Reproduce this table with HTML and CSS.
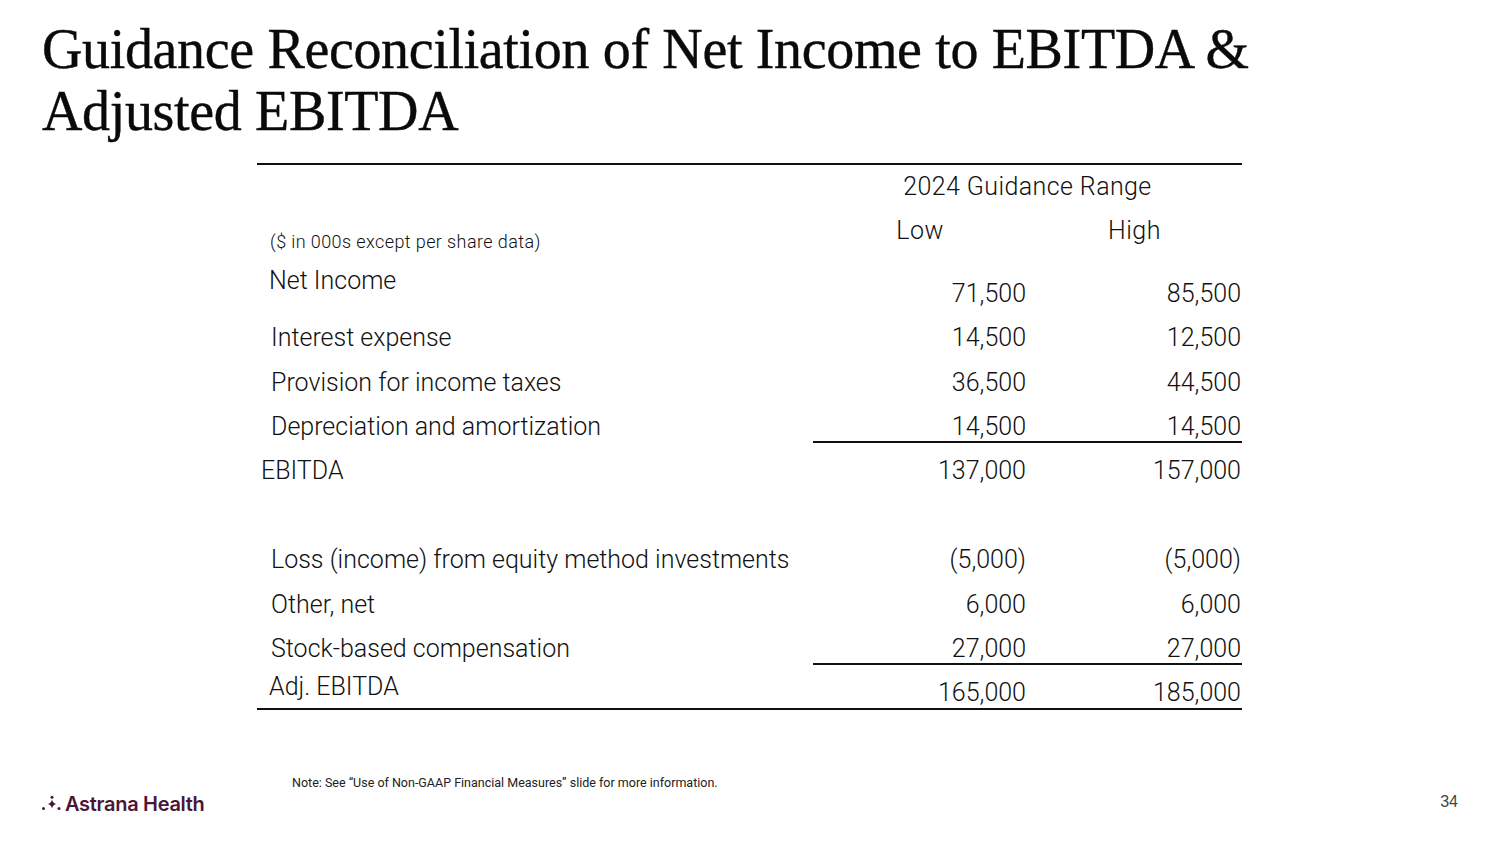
FILE: index.html
```html
<!DOCTYPE html>
<html lang="en">
<head>
<meta charset="utf-8">
<title>Guidance Reconciliation</title>
<link rel="stylesheet" href="styles.css">
</head>
<body>
<div class="slide">
  <h1 class="title">Guidance Reconciliation of Net Income to EBITDA &amp;<br>Adjusted EBITDA</h1>

  <div class="table">
    <div class="range-row"><div class="range">2024 Guidance Range</div></div>
    <div class="row hdr">
      <div class="units">($ in 000s except per share data)</div>
      <div class="colhead">Low</div>
      <div class="colhead">High</div>
    </div>
    <div class="row first">
      <div class="label l13">Net Income</div>
      <div class="val">71,500</div>
      <div class="val">85,500</div>
    </div>
    <div class="row">
      <div class="label">Interest expense</div>
      <div class="val">14,500</div>
      <div class="val">12,500</div>
    </div>
    <div class="row">
      <div class="label">Provision for income taxes</div>
      <div class="val">36,500</div>
      <div class="val">44,500</div>
    </div>
    <div class="row sub">
      <div class="label">Depreciation and amortization</div>
      <div class="val">14,500</div>
      <div class="val">14,500</div>
    </div>
    <div class="row">
      <div class="label l5">EBITDA</div>
      <div class="val">137,000</div>
      <div class="val">157,000</div>
    </div>
    <div class="row blank"></div>
    <div class="row">
      <div class="label">Loss (income) from equity method investments</div>
      <div class="val">(5,000)</div>
      <div class="val">(5,000)</div>
    </div>
    <div class="row">
      <div class="label">Other, net</div>
      <div class="val">6,000</div>
      <div class="val">6,000</div>
    </div>
    <div class="row sub">
      <div class="label">Stock-based compensation</div>
      <div class="val">27,000</div>
      <div class="val">27,000</div>
    </div>
    <div class="row last">
      <div class="label l13">Adj. EBITDA</div>
      <div class="val">165,000</div>
      <div class="val">185,000</div>
    </div>
  </div>

  <div class="footer">
    <p class="note">Note: See “Use of Non-GAAP Financial Measures” slide for more information.</p>
    <div class="footbar">
      <div class="logo">
        <svg class="mark" width="24" height="20" viewBox="0 0 24 20">
          <circle cx="12" cy="3.2" r="1.5" fill="#4b1636"/>
          <circle cx="3.5" cy="14.5" r="1.5" fill="#4b1636"/>
          <circle cx="19" cy="14.5" r="1.5" fill="#4b1636"/>
          <path d="M12 5.5 Q12.9 9.1 16.3 10 Q12.9 10.9 12 14.5 Q11.1 10.9 7.7 10 Q11.1 9.1 12 5.5 Z" fill="#4b1636"/>
        </svg>
        <span class="brand">Astrana Health</span>
      </div>
      <div class="pagenum">34</div>
    </div>
  </div>
</div>
</body>
</html>
```

FILE: styles.css
```css
* { box-sizing: border-box; }
html, body { margin: 0; padding: 0; background: #fff; }
.slide {
  width: 1500px;
  height: 844px;
  display: flex;
  flex-direction: column;
  color: #111;
  font-family: Roboto, "Liberation Sans", sans-serif;
  font-weight: 300;
  overflow: hidden;
}
.title {
  margin: 18px 0 0 42px;
  font-family: "Liberation Serif", "Times New Roman", serif;
  font-weight: 400;
  font-size: 56px;
  line-height: 62px;
  letter-spacing: -0.35px;
  color: #0a0a0a;
  -webkit-text-stroke: 0.4px #0a0a0a;
}
.table {
  margin: 21px 0 0 257px;
  width: 985px;
  border-top: 2px solid #111;
  border-bottom: 2px solid #111;
  font-size: 25px;
  letter-spacing: 0;
}
.range-row {
  display: grid;
  grid-template-columns: 556px 429px;
  padding-top: 7px;
}
.range {
  grid-column: 2;
  text-align: center;
  line-height: 30px;
  font-size: 25px;
  letter-spacing: 0.4px;
}
.row {
  display: grid;
  grid-template-columns: 556px 214px 215px;
  height: 44.4px;
  align-items: center;
}
.hdr {
  margin-top: 14px;
  height: 50px;
  align-items: start;
}
.units {
  font-size: 18px;
  line-height: 20px;
  padding: 16px 0 0 13px;
  letter-spacing: 0.4px;
}
.colhead {
  text-align: center;
  line-height: 30px;
  font-size: 25px;
  letter-spacing: 0.5px;
}
.label {
  padding-left: 14px;
  line-height: 30px;
  white-space: nowrap;
}
.label.l13 { padding-left: 12px; }
.label.l5 { padding-left: 4px; }
.val {
  text-align: right;
  padding-right: 1px;
  line-height: 30px;
}
.first {
  height: 50px;
  align-items: start;
}
.first .val { margin-top: 13px; }
.sub .val {
  line-height: 28px;
  border-bottom: 2px solid #111;
  align-self: start;
  margin-top: 8px;
}
.last {
  height: 37px;
  align-items: start;
}
.last .label { margin-top: 1px; }
.last .val { margin-top: 7px; }
.footer {
  margin-top: auto;
  padding: 0 42px 28px 42px;
}
.note {
  margin: 0 0 2px 250px;
  font-size: 12.5px;
  line-height: 14px;
  font-weight: 400;
  color: #222;
  letter-spacing: 0;
}
.footbar {
  display: flex;
  justify-content: space-between;
  align-items: center;
}
.logo {
  display: flex;
  align-items: center;
  gap: 1px;
  margin-left: -2px;
}
.mark { display: block; }
.brand {
  font-family: Inter, "Liberation Sans", sans-serif;
  font-weight: 600;
  font-size: 20px;
  letter-spacing: -0.3px;
  color: #4b1636;
  line-height: 24px;
}
.pagenum {
  font-family: "Liberation Sans", Arial, sans-serif;
  font-weight: 400;
  font-size: 16px;
  line-height: 18px;
  padding-bottom: 5px;
  color: #444;
}
```
